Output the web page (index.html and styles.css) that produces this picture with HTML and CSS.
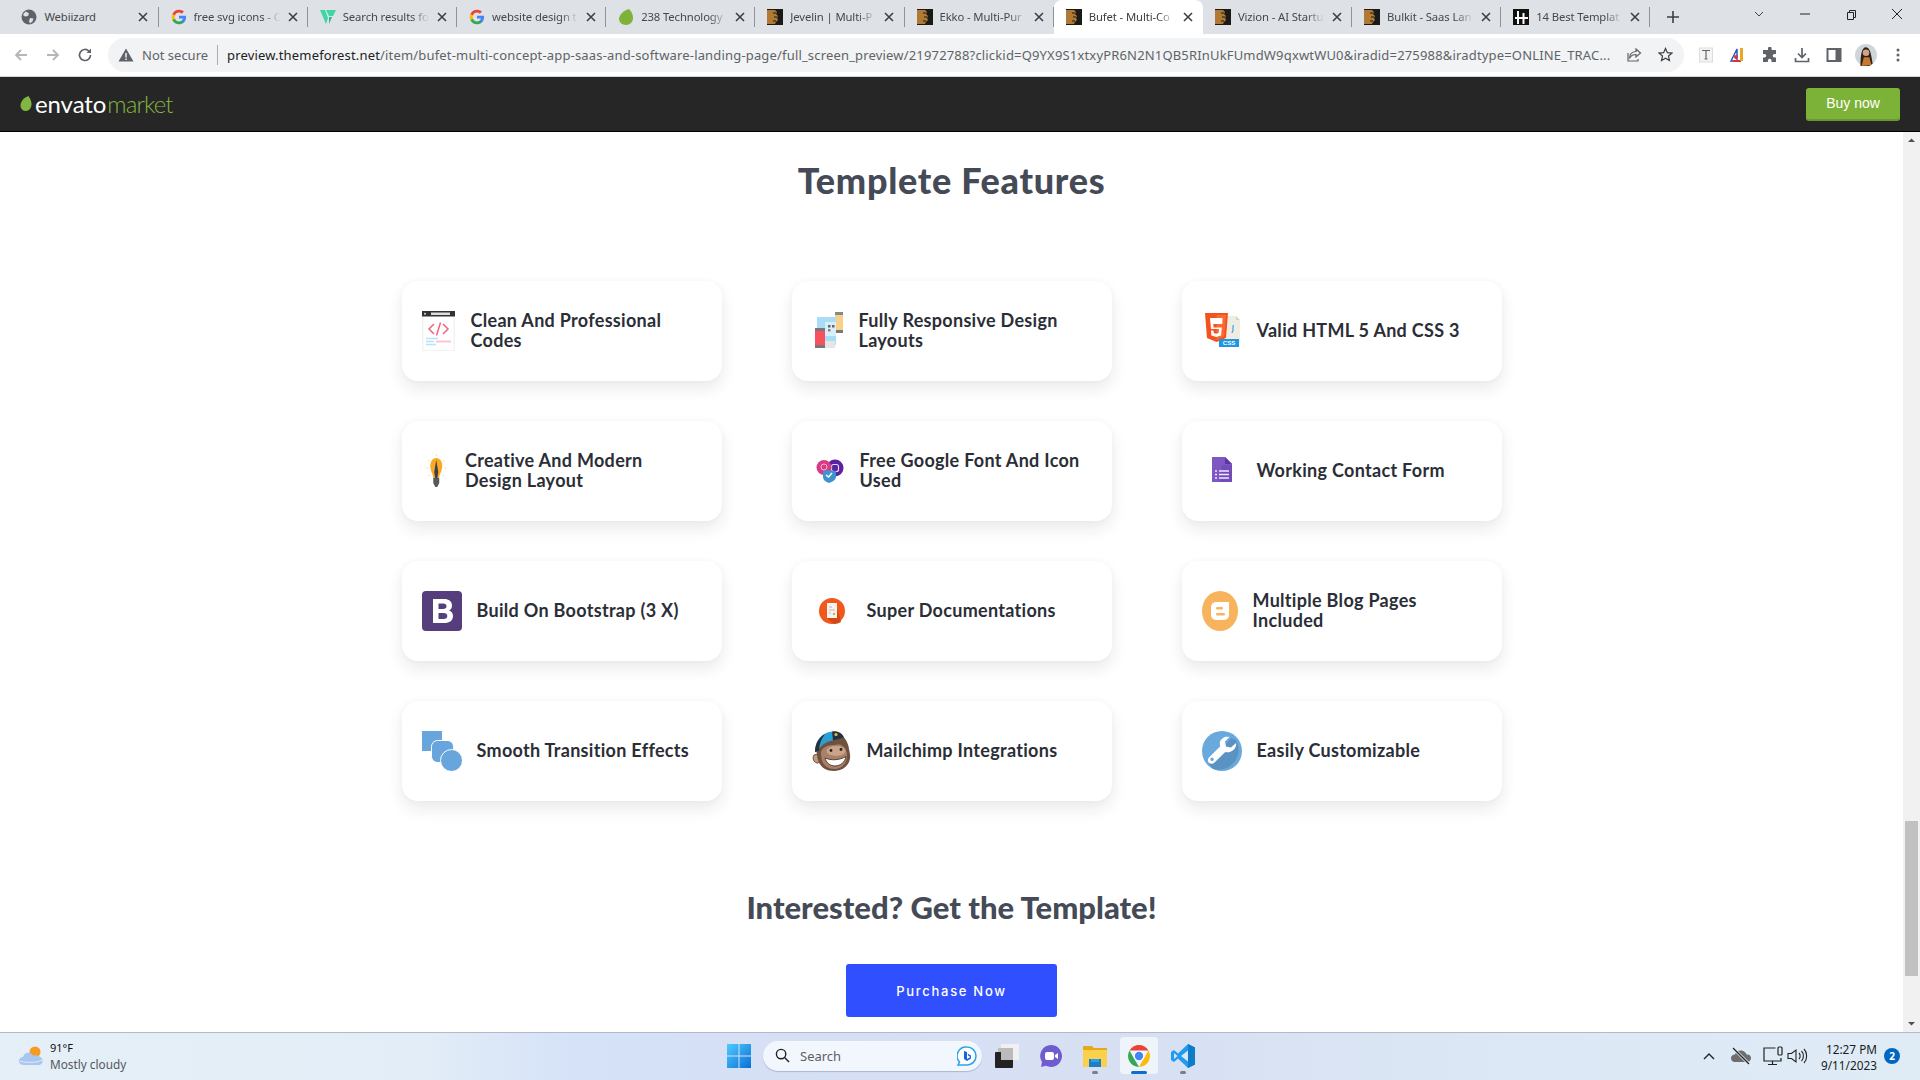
FILE: index.html
```html
<!DOCTYPE html>
<html lang="en">
<head>
<meta charset="utf-8">
<title>Bufet - Multi-Concept</title>
<link rel="stylesheet" href="styles.css">
</head>
<body>
<svg class="defs" width="0" height="0">
  <symbol id="g" viewBox="0 0 24 24"><path fill="#4285F4" d="M22.56 12.25c0-.78-.07-1.53-.2-2.25H12v4.26h5.92c-.26 1.37-1.04 2.53-2.21 3.31v2.77h3.57c2.08-1.92 3.28-4.74 3.28-8.09z"/><path fill="#34A853" d="M12 23c2.97 0 5.46-.98 7.28-2.66l-3.57-2.77c-.98.66-2.23 1.06-3.71 1.06-2.86 0-5.29-1.93-6.16-4.53H2.18v2.84C3.99 20.53 7.7 23 12 23z"/><path fill="#FBBC05" d="M5.84 14.09c-.22-.66-.35-1.36-.35-2.09s.13-1.43.35-2.09V7.07H2.18C1.43 8.55 1 10.22 1 12s.43 3.45 1.18 4.93l3.66-2.84z"/><path fill="#EA4335" d="M12 5.38c1.62 0 3.06.56 4.21 1.64l3.15-3.15C17.45 2.09 14.97 1 12 1 7.7 1 3.99 3.47 2.18 7.07l3.66 2.84c.87-2.6 3.3-4.53 6.16-4.53z"/></symbol>
  <symbol id="tf" viewBox="0 0 16 16"><rect width="16" height="16" fill="#1c1a18"/><path fill="#b07a35" d="M0 1h8l2 2-1 2 2 2-1 2 1 2-2 2-1 2H0z"/><path stroke="#1c1a18" fill="none" d="M6 4h3M7 8h3M6 12h3"/></symbol>
  <symbol id="x" viewBox="0 0 10 10"><path d="M1 1l8 8M9 1l-8 8" stroke="#3c4043" stroke-width="1.6" fill="none"/></symbol>
</svg>

<div class="tabs">
  <div class="tab"><svg class="fav" viewBox="0 0 16 16"><circle cx="8" cy="8" r="7.5" fill="#5f6368"/><path fill="#dee1e6" d="M5 2.5l3 2-1 2.5-3 .5-2-1.5C2.6 4.5 3.6 3.2 5 2.5zM9 9l3.5.5-1 3-2.5 2-1-2.5z"/></svg><span class="title">Webiizard</span><svg class="close"><use href="#x"/></svg></div>
  <div class="tab"><svg class="fav"><use href="#g"/></svg><span class="title fade">free svg icons - G</span><svg class="close"><use href="#x"/></svg></div>
  <div class="tab"><svg class="fav" viewBox="0 0 16 16"><path fill="#3fd6a5" d="M0 1h5l3 8-2 6zM6 1h10l-3 6H9z"/><path fill="#2bb98c" d="M9 8h3l-3 7z"/></svg><span class="title fade">Search results fo</span><svg class="close"><use href="#x"/></svg></div>
  <div class="tab"><svg class="fav"><use href="#g"/></svg><span class="title fade">website design t</span><svg class="close"><use href="#x"/></svg></div>
  <div class="tab"><svg class="fav" viewBox="0 0 16 16"><path fill="#7fb239" d="M11 0c3 3 4 6 4 9 0 4-3 7-7 7s-7-3-7-6c0-5 6-9 10-10z"/></svg><span class="title fade">238 Technology</span><svg class="close"><use href="#x"/></svg></div>
  <div class="tab"><svg class="fav"><use href="#tf"/></svg><span class="title fade">Jevelin | Multi-P</span><svg class="close"><use href="#x"/></svg></div>
  <div class="tab"><svg class="fav"><use href="#tf"/></svg><span class="title fade">Ekko - Multi-Pur</span><svg class="close"><use href="#x"/></svg></div>
  <div class="tab active"><svg class="fav"><use href="#tf"/></svg><span class="title fade">Bufet - Multi-Co</span><svg class="close"><use href="#x"/></svg></div>
  <div class="tab"><svg class="fav"><use href="#tf"/></svg><span class="title fade">Vizion - AI Startu</span><svg class="close"><use href="#x"/></svg></div>
  <div class="tab"><svg class="fav"><use href="#tf"/></svg><span class="title fade">Bulkit - Saas Lan</span><svg class="close"><use href="#x"/></svg></div>
  <div class="tab"><svg class="fav" viewBox="0 0 16 16"><rect width="16" height="16" fill="#111"/><path stroke="#fff" stroke-width="2" fill="none" d="M5 2v13M10.500 4v11M2 9h13"/></svg><span class="title fade">14 Best Templat</span><svg class="close"><use href="#x"/></svg></div>
  <svg class="plus" viewBox="0 0 12 12"><path d="M6 0v12M0 6h12" stroke="#3c4043" stroke-width="1.600"/></svg>
  <div class="win">
    <svg class="wbtn" viewBox="0 0 46 28"><path d="M19 12l4 4 4-4" fill="none" stroke="#444" /></svg>
    <svg class="wbtn" viewBox="0 0 46 28"><path d="M18 14h10" stroke="#222"/></svg>
    <svg class="wbtn" viewBox="0 0 46 28"><path d="M19.500 12.500h6v7h-6zM21.500 12.500v-2h6v7h-2" fill="none" stroke="#222"/></svg>
    <svg class="wbtn" viewBox="0 0 46 28"><path d="M18 9l10 10M28 9L18 19" stroke="#222"/></svg>
  </div>
</div>

<div class="toolbar">
  <svg class="nav" viewBox="0 0 16 16"><path d="M14 8H3M8 3L3 8l5 5" fill="none" stroke="#b3b6ba" stroke-width="1.800"/></svg>
  <svg class="nav" viewBox="0 0 16 16"><path d="M2 8h11M8 3l5 5-5 5" fill="none" stroke="#b3b6ba" stroke-width="1.800"/></svg>
  <svg class="nav" viewBox="0 0 16 16"><path d="M13.500 8a5.500 5.500 0 1 1-1.600-3.900" fill="none" stroke="#5f6368" stroke-width="1.700"/><path d="M14 1.500V6H9.500z" fill="#5f6368"/></svg>
  <div class="pill">
    <svg class="warn" viewBox="0 0 16 16"><path d="M8 1.500L15.500 14.500H.5z" fill="#5f6368"/><path d="M8 6v4.500M8 11.500v1.500" stroke="#f1f3f4" stroke-width="1.500"/></svg>
    <span class="insecure">Not secure</span>
    <span class="divider"></span>
    <span class="url"><b>preview.themeforest.net</b>/item/bufet-multi-concept-app-saas-and-software-landing-page/full_screen_preview/21972788?clickid=Q9YX9S1xtxyPR6N2N1QB5RInUkFUmdW9qxwtWU0&amp;iradid=275988&amp;iradtype=ONLINE_TRAC...</span>
    <svg class="pill-ic share" viewBox="0 0 16 16"><path d="M10 2l4.500 4-4.500 4V7.500C6.500 7.500 4.500 9 3.500 11.500 3.500 7.500 6 4.800 10 4.500z" fill="none" stroke="#5f6368" stroke-width="1.200"/><path d="M2 6v8h10v-2" fill="none" stroke="#5f6368" stroke-width="1.200"/></svg>
    <svg class="pill-ic star" viewBox="0 0 16 16"><path d="M8 1.500l2 4.500 4.800.5-3.600 3.200 1 4.800L8 12l-4.200 2.500 1-4.800L1.200 6.500 6 6z" fill="none" stroke="#3c4043" stroke-width="1.300"/></svg>
  </div>
  <div class="exts">
    <svg class="ext" viewBox="0 0 16 16"><rect x="1.500" y="1" width="13" height="14" fill="#f4f4f4" stroke="#ddd"/><path d="M4 3.500h8M8 3.500V12M6.500 12h3" stroke="#666" stroke-width="1.200" fill="none"/></svg>
    <svg class="ext" viewBox="0 0 16 16"><path d="M1 14L7 2v12z" fill="none" stroke="#2a55c8" stroke-width="1.500"/><path d="M3 14h8" stroke="#d33" stroke-width="2"/><path d="M10 1h3v13h-3z" fill="#e9a825"/><circle cx="6" cy="10" r="2" fill="#d33"/></svg>
    <svg class="ext" viewBox="0 0 16 16"><path fill="#5f6368" d="M6 1.500a1.800 1.800 0 0 1 3.600 0V3H14v4h-1.500a1.800 1.800 0 0 0 0 3.600H14V15H9.500v-1.500a1.800 1.800 0 0 0-3.600 0V15H1v-4.500h1.500a1.800 1.800 0 0 0 0-3.600H1V3h5z"/></svg>
    <svg class="ext" viewBox="0 0 16 16"><path d="M8 1v9M4 6.500L8 10.500l4-4M1.500 11v3.500h13V11" fill="none" stroke="#5f6368" stroke-width="1.700"/></svg>
    <svg class="ext" viewBox="0 0 16 16"><rect x="1.500" y="2" width="13" height="12" fill="none" stroke="#5f6368" stroke-width="2"/><rect x="9.500" y="2" width="5" height="12" fill="#5f6368"/></svg>
    <svg class="ext avatar" viewBox="0 0 20 20"><circle cx="10" cy="10" r="10" fill="#cfd6da"/><path d="M5 20c0-10 1-17 5-17s5 8 6 15l-3 2z" fill="#2d211c"/><circle cx="10" cy="8" r="3" fill="#d7a283"/><path d="M6 20l2-8h5l2 7z" fill="#c9772f"/></svg>
    <svg class="ext" viewBox="0 0 16 16"><circle cx="8" cy="3" r="1.500" fill="#5f6368"/><circle cx="8" cy="8" r="1.500" fill="#5f6368"/><circle cx="8" cy="13" r="1.500" fill="#5f6368"/></svg>
  </div>
</div>

<header class="site-header">
  <div class="logo">
    <svg class="leaf" viewBox="0 0 12 15"><path fill="#82b541" d="M8.500 0c2 3 3 5.500 3 8 0 4-2.500 7-5.500 7S.500 13 .500 9.500C.500 5.500 4 1.500 8.500 0z"/></svg>
    <span class="envato">envato</span><span class="market">market</span>
  </div>
  <a class="buy">Buy now</a>
</header>

<div class="viewport">
  <main class="page">
    <h1 class="h-main">Templete Features</h1>
    <section class="grid">
      <article class="card">
        <svg class="ic" width="34" height="40" viewBox="0 0 34 40"><rect width="33" height="40" fill="#f3f3f3"/><rect x="1.500" y="5" width="30" height="34" fill="#fff"/><rect width="33" height="5.500" fill="#333"/><rect x="9" y="1.500" width="19" height="2.500" fill="#ddd"/><circle cx="3" cy="2.700" r="1" fill="#ddd"/><path d="M12 13l-5 5 5 5M21 13l5 5-5 5M18.500 11.500l-4 13" fill="none" stroke="#f4637c" stroke-width="1.500"/><path d="M4 27.500h12M4 30.500h8M4 33.500h10" stroke="#b5e4f7" stroke-width="1.500"/><path d="M14 30.500h15" stroke="#ffc4cf" stroke-width="2"/></svg>
        <h3 class="label">Clean And Professional Codes</h3>
      </article>
      <article class="card">
        <svg class="ic" width="32" height="40" viewBox="0 0 32 40"><rect x="23" y="1" width="8" height="21" rx="1" fill="#f9cf8c"/><rect x="23" y="1" width="8" height="3" fill="#888"/><rect x="23" y="19" width="8" height="3" fill="#777"/><rect x="5" y="6" width="19" height="28" fill="#a9dcf6"/><rect x="13" y="11" width="11" height="14" fill="#d8eef8"/><rect x="16" y="14" width="2.500" height="2.500" fill="#666"/><rect x="20" y="14" width="2.500" height="2.500" fill="#666"/><rect x="16" y="18" width="2.500" height="2.500" fill="#888"/><rect x="9" y="30" width="14" height="7" fill="#e6e6e6"/><rect x="3" y="17" width="10" height="20" rx="1" fill="#f8505f"/><rect x="3" y="17" width="10" height="3" fill="#777"/><rect x="3" y="34" width="10" height="3" fill="#777"/></svg>
        <h3 class="label">Fully Responsive Design Layouts</h3>
      </article>
      <article class="card">
        <svg class="ic" width="40" height="40" viewBox="0 0 40 40"><path d="M23 5h11l4 4v22H23z" fill="#efece2"/><path d="M34 5l4 4h-4z" fill="#d8d4c6"/><path d="M31 14c1 2-1 3 0 4s-1 3-1 4" fill="none" stroke="#3ba3e0" stroke-width="1.200"/><path d="M3 2h23l-2 25-9.500 4L5 27z" fill="#f4511e"/><path d="M14.500 4v25l7.500-3.200L24 4z" fill="#fb6a33"/><path d="M20.500 7H8l1 11h8l-.3 4-2.500.8-2.500-.8-.2-2.500H9l.4 5 4.800 1.500 4.900-1.500.7-8h-8.200l-.3-3.500h9z" fill="#fff"/><rect x="17" y="28" width="20" height="8" fill="#1e96e0"/><text x="27" y="34.300" class="csstxt" text-anchor="middle">CSS</text></svg>
        <h3 class="label">Valid HTML 5 And CSS 3</h3>
      </article>

      <article class="card">
        <svg class="ic" width="28.500" height="40" viewBox="0 0 28 40"><path d="M14 3v2M6 9l1.500 1.500M22 9l-1.500 1.500M4 17h2M22 17h2M6 25l1.500-1M22 25l-1.500-1" stroke="#f6dd9a" stroke-width="1"/><path d="M14 7c4 0 6 4 6 8 0 5-3 8-3 12h-6c0-4-3-7-3-12 0-4 2-8 6-8z" fill="#f9a926"/><path d="M14 9l2 12-1 7h-2l-1-7z" fill="#3c3f44"/><path d="M11 27h6v5l-2 4h-2l-2-4z" fill="#55585d"/></svg>
        <h3 class="label">Creative And Modern Design Layout</h3>
      </article>
      <article class="card">
        <svg class="ic" width="33" height="40" viewBox="0 0 33 40"><circle cx="23" cy="17" r="8.500" fill="#5a21a3"/><rect x="19.500" y="13.500" width="7" height="7" rx="2" fill="none" stroke="#e5d7f5" stroke-width="1.200"/><circle cx="12" cy="16.500" r="7.500" fill="#d93a86"/><circle cx="12" cy="16" r="3" fill="none" stroke="#f5b5d3"/><path d="M17 19c3 0 6 1 7 1v6c0 3-4 5-7 6-3-1-6-3-6-6v-6c1 0 4-1 6-1z" fill="#3f93cc"/><path d="M14 24l2.500 2 3.500-4" fill="none" stroke="#fff" stroke-width="1.500"/></svg>
        <h3 class="label">Free Google Font And Icon Used</h3>
      </article>
      <article class="card">
        <svg class="ic" width="40" height="40" viewBox="0 0 40 40"><path d="M10 6h13l7 7v18H10z" fill="#7e57c2"/><path d="M23 6l7 7h-7z" fill="#5e35a8"/><path d="M20 14h10v17H18z" fill="#6a45b0" opacity=".6"/><path d="M13 20h2M17 20h10M13 23.500h2M17 23.500h10M13 27h2M17 27h10" stroke="#f1e9fb" stroke-width="1.500"/></svg>
        <h3 class="label">Working Contact Form</h3>
      </article>

      <article class="card">
        <svg class="ic" width="40" height="40" viewBox="0 0 40 40"><rect width="40" height="40" rx="4" fill="#563d7c"/><path fill="#fff" fill-rule="evenodd" d="M11 8h11c5 0 8 2.500 8 6.500 0 2.500-1.200 4.200-3 5 2.500.7 4 2.700 4 5.500 0 4.500-3.300 7-9 7H11zm5.500 4.500v5.500h4.500c2.300 0 3.500-1 3.500-2.800s-1.200-2.700-3.500-2.700zm0 9.500v6h5c2.500 0 3.800-1 3.800-3s-1.300-3-3.800-3z"/></svg>
        <h3 class="label">Build On Bootstrap (3 X)</h3>
      </article>
      <article class="card">
        <svg class="ic" width="40" height="40" viewBox="0 0 40 40"><circle cx="20" cy="20" r="13" fill="#f2581b"/><path d="M15 13h9l5 18a13 13 0 0 1-7 2L15 27z" fill="#d14a16"/><rect x="15" y="12" width="10" height="15" fill="#f7f3ee"/><path d="M17 16h3M17 19h6M17 22h2" stroke="#bbb"/><rect x="21" y="22" width="2" height="2" fill="#f29a2e"/></svg>
        <h3 class="label">Super Documentations</h3>
      </article>
      <article class="card">
        <svg class="ic" width="36" height="40" viewBox="0 0 36 40"><ellipse cx="18" cy="20" rx="18" ry="20" fill="#f7b45c"/><rect x="9" y="11" width="18" height="18" rx="5" fill="#fff"/><rect x="14" y="16" width="7" height="2.500" rx="1.200" fill="#f7b45c"/><rect x="14" y="22" width="9" height="2.500" rx="1.200" fill="#f7b45c"/><path d="M21 11h6v6z" fill="#fff"/></svg>
        <h3 class="label">Multiple Blog Pages Included</h3>
      </article>

      <article class="card">
        <svg class="ic" width="40" height="40" viewBox="0 0 40 40"><rect width="20" height="20" fill="#67a5dc"/><rect x="9.500" y="9.500" width="22" height="22" rx="6" fill="#67a5dc" stroke="#fff"/><circle cx="29.500" cy="29.500" r="11" fill="#67a5dc" stroke="#fff"/></svg>
        <h3 class="label">Smooth Transition Effects</h3>
      </article>
      <article class="card">
        <svg class="ic" width="40" height="40" viewBox="0 0 40 40">
          <path d="M2 24c-1.500 2-1 6 1.500 7.500 2 1 3.500.5 4.500-1L6 23z" fill="#c49a7c" stroke="#4a3426" stroke-width=".8"/>
          <path d="M5 20C6 8 14 2 22 2c9 0 14 8 15 16 1 5 2 9 0 13-2 5-8 9-15 9-8 0-14-4-16-11-1-3-1.500-6-1-9z" fill="#6f5140"/>
          <path d="M9 21c1-4 6-7 12-7 3 0 5-1 8 0 5 2 6 7 6 11 0 8-6 13-13 13S10 33 9.500 27c-.3-2-.7-4-.5-6z" fill="#a98168"/>
          <ellipse cx="24" cy="20" rx="9.500" ry="5" fill="#c9a48a"/>
          <path d="M13 27c6 2.500 14 2.500 21-1.500-1 6-6 9.500-11 9.500s-9-3.500-10-8z" fill="#fff" stroke="#4a3426" stroke-width=".9"/>
          <path d="M3 21C3 10 9 2 20 .5c2 3 2 7 1 9-7 1-13 5-16 12z" fill="#2a9fd6"/>
          <path d="M20 .5c5-1 10 1 12 6l-11 3z" fill="#25323c"/>
          <path d="M3 21C3 13 7 6 13 3c-4 5-6 11-6 17z" fill="#25323c"/>
          <circle cx="24" cy="3.500" r="1.600" fill="#f0b63c"/>
          <circle cx="19" cy="19.500" r="1.400" fill="#222"/><circle cx="29" cy="18.500" r="1.400" fill="#222"/>
        </svg>
        <h3 class="label">Mailchimp Integrations</h3>
      </article>
      <article class="card">
        <svg class="ic" width="40" height="40" viewBox="0 0 40 40"><circle cx="20" cy="20" r="20" fill="#6aa9dc"/><path d="M34 9a20 20 0 0 1-23 29L7 33 29 7z" fill="#5b92c4"/><path fill="#fff" d="M34 12l-5 4.500-5-1-1-5 4.500-4.500c-4-1-8.500 1-9.500 5-.4 1.500-.2 3 .3 4.200L7.500 26c-2 1.700-2 4.200-.7 5.700 1.500 1.500 4 1.500 5.700-.3l10.800-10.500c1.500.5 3 .6 4.500.2 4-1.200 7-5 6.200-9.100zM10 30a1.700 1.700 0 1 1 0-3.400 1.700 1.700 0 0 1 0 3.400z"/></svg>
        <h3 class="label">Easily Customizable</h3>
      </article>
    </section>
    <h2 class="h-sub">Interested? Get the Template!</h2>
    <a class="purchase">Purchase Now</a>
  </main>
  <aside class="scrollbar">
    <svg class="arrow" viewBox="0 0 17 17"><path d="M5 10l3.500-3.500L12 10z" fill="#505050"/></svg>
    <div class="track"><div class="thumb"></div></div>
    <svg class="arrow" viewBox="0 0 17 17"><path d="M5 7l3.500 3.500L12 7z" fill="#505050"/></svg>
  </aside>
</div>

<footer class="taskbar">
  <div class="weather">
    <svg class="cloud" viewBox="0 0 24 20"><circle cx="16" cy="6" r="5.500" fill="#f59a23"/><path d="M5 19c-3 0-5-1.500-5-4s2-4 4-4c1-3.500 4-5 7-4 2 .7 3 2 3.500 3 1-1 3-1 5 0 3 1 4 3 4 5 0 3-2 4-4 4z" fill="#a9c6ee"/><path d="M1 15c5 2 17 2 22-1" stroke="#dfeafa" fill="none"/></svg>
    <div class="w-text"><span class="temp">91°F</span><span class="cond">Mostly cloudy</span></div>
  </div>
  <div class="tb">
    <svg class="tb-ic" viewBox="0 0 24 24"><defs><linearGradient id="w" x1="0" y1="0" x2="1" y2="1"><stop offset="0" stop-color="#4fcbff"/><stop offset="1" stop-color="#0a6fd6"/></linearGradient></defs><path fill="url(#w)" d="M0 0h11.500v11.500H0zM12.500 0H24v11.500H12.500zM0 12.500h11.500V24H0zM12.500 12.500H24V24H12.500z"/></svg>
  </div>
  <div class="search">
    <svg class="s-ic" viewBox="0 0 16 16"><circle cx="6.500" cy="6.500" r="5" fill="none" stroke="#222" stroke-width="1.500"/><path d="M10.500 10.500l4.500 4.500" stroke="#222" stroke-width="1.500"/></svg>
    <span class="s-text">Search</span>
    <svg class="bing" viewBox="0 0 20 20"><path d="M10 1a9 9 0 0 1 0 18H1l1.500-3A9 9 0 0 1 10 1z" fill="#fff" stroke="#2aa5e8" stroke-width="1.500"/><path d="M7 5l3 1v7l3.500-2-2-1-1-2.500L14 9.500v3l-4 2.500-3-2z" fill="#1566d6"/></svg>
  </div>
  <div class="tb-group">
    <div class="tb"><svg class="tb-ic" viewBox="0 0 24 24"><rect x="6" y="0" width="18" height="16" fill="#f0f0f0"/><rect x="3" y="4" width="15" height="14" fill="#bbb"/><rect y="8" width="18" height="16" rx="1" fill="#222"/><rect x="6" y="8" width="12" height="8" fill="#bbb"/></svg></div>
    <div class="tb"><svg class="tb-ic" viewBox="0 0 24 24"><path d="M12 1a11 11 0 1 1-5 20.800L2 23l1-5A11 11 0 0 1 12 1z" fill="#6f5ccf"/><rect x="6" y="8" width="9" height="8" rx="2" fill="#fff"/><path d="M16 11l3-2v6l-3-2z" fill="#fff"/></svg></div>
    <div class="tb"><svg class="tb-ic" viewBox="0 0 24 24"><path d="M0 2h9l2 2h13v4H0z" fill="#e5a91f"/><path d="M0 6h24v17H0z" fill="#fbd14b"/><rect x="6" y="15" width="12" height="8" fill="#1d7fc4"/><rect x="8" y="15" width="8" height="3" fill="#2ba0e8"/></svg><span class="dot"></span></div>
    <div class="tb on"><svg class="tb-ic" viewBox="0 0 24 24"><path d="M2.500 6.500a11 11 0 0 1 19 0H12z" fill="#ea4335"/><path d="M21.500 6.500A11 11 0 0 1 12 23l5-8.500z" fill="#fbbc05"/><path d="M12 23A11 11 0 0 1 2.500 6.500L7 14.500z" fill="#34a853"/><circle cx="12" cy="12" r="5.300" fill="#fff"/><circle cx="12" cy="12" r="4.200" fill="#4285f4"/></svg><span class="run"></span></div>
    <div class="tb"><svg class="tb-ic" viewBox="0 0 24 24"><path d="M17 0l7 3.500v17L17 24l-10-9.500L3 18l-3-2V8l3-2 4 3.500z" fill="#1f9cf0"/><path d="M17 0l7 3.500v17L17 24z" fill="#0d7cc9"/><path d="M17 6.500L10 12l7 5.500z" fill="#dce6f5"/><path d="M3 9l3.500 3L3 15z" fill="#dce6f5"/></svg><span class="dot"></span></div>
  </div>
  <div class="tray">
    <svg class="tr" viewBox="0 0 24 24"><path d="M7 15l5-5 5 5" fill="none" stroke="#222" stroke-width="1.400"/></svg>
    <svg class="tr gap" viewBox="0 0 24 24"><path d="M6 18c-3 0-4-2-4-4s2-3.500 4-3.500C7 7 10 6 13 6.500c2.500.5 4 2.500 4.500 4 3-.3 4.500 1.500 4.500 3.500s-1.500 4-4 4z" fill="#6e6e6e"/><path d="M4 4l16 16" stroke="#dbe9f5" stroke-width="3"/><path d="M4 4l16 16" stroke="#222" stroke-width="1.200"/></svg>
    <svg class="tr gap" viewBox="0 0 24 24"><path d="M14.500 4H3v13h17v-3M11.500 17v3M7 20.500h9" fill="none" stroke="#222" stroke-width="1.200"/><rect x="17" y="3" width="4" height="8" rx="1" fill="none" stroke="#222" stroke-width="1.200"/></svg>
    <svg class="tr" viewBox="0 0 24 24"><path d="M3 9.500h3.500L11 6v12l-4.500-3.500H3z" fill="none" stroke="#222" stroke-width="1.100"/><path d="M14 9c1.500 1.500 1.500 4.500 0 6M16.500 7c2.500 2.500 2.500 7.500 0 10M19 5c3.500 3.500 3.500 10.500 0 14" fill="none" stroke="#222" stroke-width="1.100"/></svg>
    <div class="clock"><span>12:27 PM</span><span>9/11/2023</span></div>
    <span class="badge">2</span>
  </div>
</footer>
</body>
</html>
```
FILE: styles.css
```css
* { box-sizing: border-box; }
html, body { margin: 0; height: 100%; }
body {
  display: flex;
  flex-direction: column;
  height: 100vh;
  overflow: hidden;
  background: #fff;
  font-family: "Noto Sans", sans-serif;
}
.defs { position: absolute; }

/* Tab strip */
.tabs {
  height: 34px;
  flex: none;
  display: flex;
  align-items: stretch;
  padding-left: 9.4px;
  background: #dee1e6;
}
.tab {
  flex: 0 0 149.2px;
  position: relative;
  display: flex;
  align-items: center;
  padding: 0 0 1px 12px;
  color: #45484d;
  font-size: 11.3px;
  letter-spacing: -0.12px;
}
.tab::after {
  content: "";
  position: absolute;
  right: 0;
  top: 7px;
  height: 20px;
  width: 1px;
  background: #8f9398;
}
.tab.active {
  background: #fff;
  border-radius: 8px 8px 0 0;
  color: #3c4043;
}
.tab.active::after { display: none; }
.fav { width: 16px; height: 16px; flex: none; }
.title {
  width: 88px;
  margin-left: 7px;
  overflow: hidden;
  white-space: nowrap;
}
.title.fade {
  -webkit-mask-image: linear-gradient(to right, #000 78%, transparent 98%);
  mask-image: linear-gradient(to right, #000 78%, transparent 98%);
}
.close { width: 10px; height: 10px; margin-left: 6px; flex: none; }
.plus { width: 12px; height: 12px; align-self: center; margin-left: 17px; flex: none; }
.win { margin-left: auto; display: flex; align-self: flex-start; }
.wbtn { width: 46px; height: 28px; display: block; }

/* Toolbar */
.toolbar {
  height: 43px;
  flex: none;
  display: flex;
  align-items: center;
  padding: 0 0 1px 5px;
  background: #fff;
  border-bottom: 1px solid #d5d6d8;
}
.nav { width: 32px; height: 16px; }
.pill {
  width: 1576px;
  height: 34px;
  margin-left: 7px;
  display: flex;
  align-items: center;
  padding-left: 10px;
  border-radius: 17px;
  background: #f1f3f4;
  font-size: 13px;
  color: #5f6368;
}
.warn { width: 16px; height: 16px; flex: none; }
.insecure { margin-left: 8px; width: 67px; white-space: nowrap; }
.divider { width: 1px; height: 20px; margin-left: 8px; background: #a9acb0; }
.url {
  width: 1385px;
  margin-left: 9px;
  white-space: nowrap;
  letter-spacing: 0.17px;
}
.url b { font-weight: 400; color: #202124; }
.pill-ic { width: 16px; height: 16px; flex: none; }
.share { margin-left: 14px; }
.star { margin-left: 16px; width: 15px; height: 15px; }
.exts { display: flex; align-items: center; margin-left: 6px; }
.ext { width: 32px; height: 16px; display: block; }
.ext.avatar { height: 22px; }

/* Site bar */
.site-header {
  height: 55px;
  flex: none;
  display: flex;
  align-items: center;
  justify-content: space-between;
  padding: 0 20px;
  background: #262626;
  border-bottom: 1px solid #000;
}
.logo { display: flex; align-items: center; font-family: "Lato", sans-serif; font-size: 24px; line-height: 28px; padding-bottom: 1px; }
.leaf { width: 12px; height: 15px; margin-right: 3px; }
.envato { color: #fff; font-weight: 400; letter-spacing: -0.1px; }
.market { color: #82b541; font-weight: 300; margin-left: 1px; letter-spacing: -0.9px; }
.buy {
  width: 94px;
  height: 33px;
  display: flex;
  align-items: center;
  justify-content: center;
  border-radius: 3px;
  background: #7db238;
  border-bottom: 2px solid #6a9a2f;
  color: #fff;
  font: 14px "Liberation Sans", sans-serif;
}

/* Page */
.viewport { flex: 1; min-height: 0; display: flex; }
.page {
  flex: 1;
  display: flex;
  flex-direction: column;
  align-items: center;
  padding-top: 26px;
  background: #fff;
}
.h-main {
  margin: 0 0 79px;
  font: 900 36px/44px "Lato", sans-serif;
  letter-spacing: 0.7px;
  color: #454a57;
}
.grid {
  display: grid;
  grid-template-columns: repeat(3, 320px);
  gap: 40px 70px;
}
.card {
  height: 100px;
  display: flex;
  align-items: center;
  padding: 0 20px;
  background: #fff;
  border-radius: 16px;
  box-shadow: 0 8px 16px rgba(30, 35, 50, 0.09), 0 0 6px rgba(30, 35, 50, 0.03);
}
.ic { flex: none; margin-right: 15px; }
.label {
  max-width: 228px;
  margin: 0;
  padding-bottom: 2px;
  font: 700 18px/20px "Lato", sans-serif;
  letter-spacing: 0.3px;
  color: #2b2e36;
}
.csstxt { font: 700 6px "Liberation Sans", sans-serif; fill: #fff; }
.h-sub {
  margin: 86px 0 37px;
  font: 900 31px/40px "Lato", sans-serif;
  color: #454a57;
}
.purchase {
  width: 211px;
  height: 53px;
  display: flex;
  align-items: center;
  justify-content: center;
  border-radius: 3px;
  background: #304ffe;
  color: #fff;
  font: 500 13px "Inter", sans-serif;
  letter-spacing: 1.7px;
}

/* Scrollbar */
.scrollbar {
  width: 17px;
  flex: none;
  display: flex;
  flex-direction: column;
  background: #f1f1f1;
}
.arrow { width: 17px; height: 17px; flex: none; }
.track { flex: 1; padding: 672px 2px 0; }
.thumb { height: 155px; background: #c1c1c1; }

/* Taskbar */
.taskbar {
  height: 48px;
  flex: none;
  display: flex;
  align-items: center;
  padding-bottom: 2px;
  border-top: 1px solid #b3bac5;
  background: linear-gradient(to right, #e4eff7 0%, #e2edf7 22%, #d5e2f8 30%, #d6dff4 45%, #d8e1f3 62%, #dce8f5 80%, #dfecf6 100%);
}
.weather { width: 720px; flex: none; display: flex; align-items: center; padding-left: 19px; }
.cloud { width: 24px; height: 20px; }
.w-text { display: flex; flex-direction: column; margin-left: 7px; line-height: 16px; }
.temp { font-size: 11px; color: #111; }
.cond { font-size: 11.8px; color: #55585c; }
.tb {
  width: 38px;
  height: 37px;
  position: relative;
  display: flex;
  align-items: center;
  justify-content: center;
  border-radius: 4px;
}
.tb.on { background: #eff3fa; }
.tb-ic { width: 24px; height: 24px; display: block; }
.dot {
  position: absolute;
  left: 16px;
  bottom: 0;
  width: 6px;
  height: 3px;
  border-radius: 2px;
  background: #7b7f85;
}
.run {
  position: absolute;
  left: 11px;
  bottom: 0;
  width: 16px;
  height: 3px;
  border-radius: 2px;
  background: #0a6fd0;
}
.search {
  width: 219px;
  height: 30px;
  margin: 0 6px 0 5px;
  display: flex;
  align-items: center;
  padding: 0 5px 0 12px;
  border-radius: 15px;
  background: #f2f6fd;
  box-shadow: 0 1px 1px rgba(90, 110, 150, 0.35);
}
.s-ic { width: 15px; height: 15px; flex: none; }
.s-text { margin-left: 10px; font-size: 13px; color: #5c5f64; }
.bing { width: 20px; height: 20px; margin-left: auto; }
.tb-group { display: flex; gap: 6px; }
.tray { margin-left: auto; display: flex; align-items: center; padding-right: 20px; }
.tr { width: 24px; height: 24px; display: block; }
.tr.gap { margin-left: 8px; }
.clock {
  width: 68px;
  margin-top: 2px;
  display: flex;
  flex-direction: column;
  align-items: flex-end;
  font-size: 11.8px;
  line-height: 16px;
  color: #1c1c1c;
}
.badge {
  width: 16px;
  height: 16px;
  margin-left: 7px;
  display: flex;
  align-items: center;
  justify-content: center;
  border-radius: 50%;
  background: #0067c0;
  color: #fff;
  font-size: 10px;
  font-weight: 700;
}
```
